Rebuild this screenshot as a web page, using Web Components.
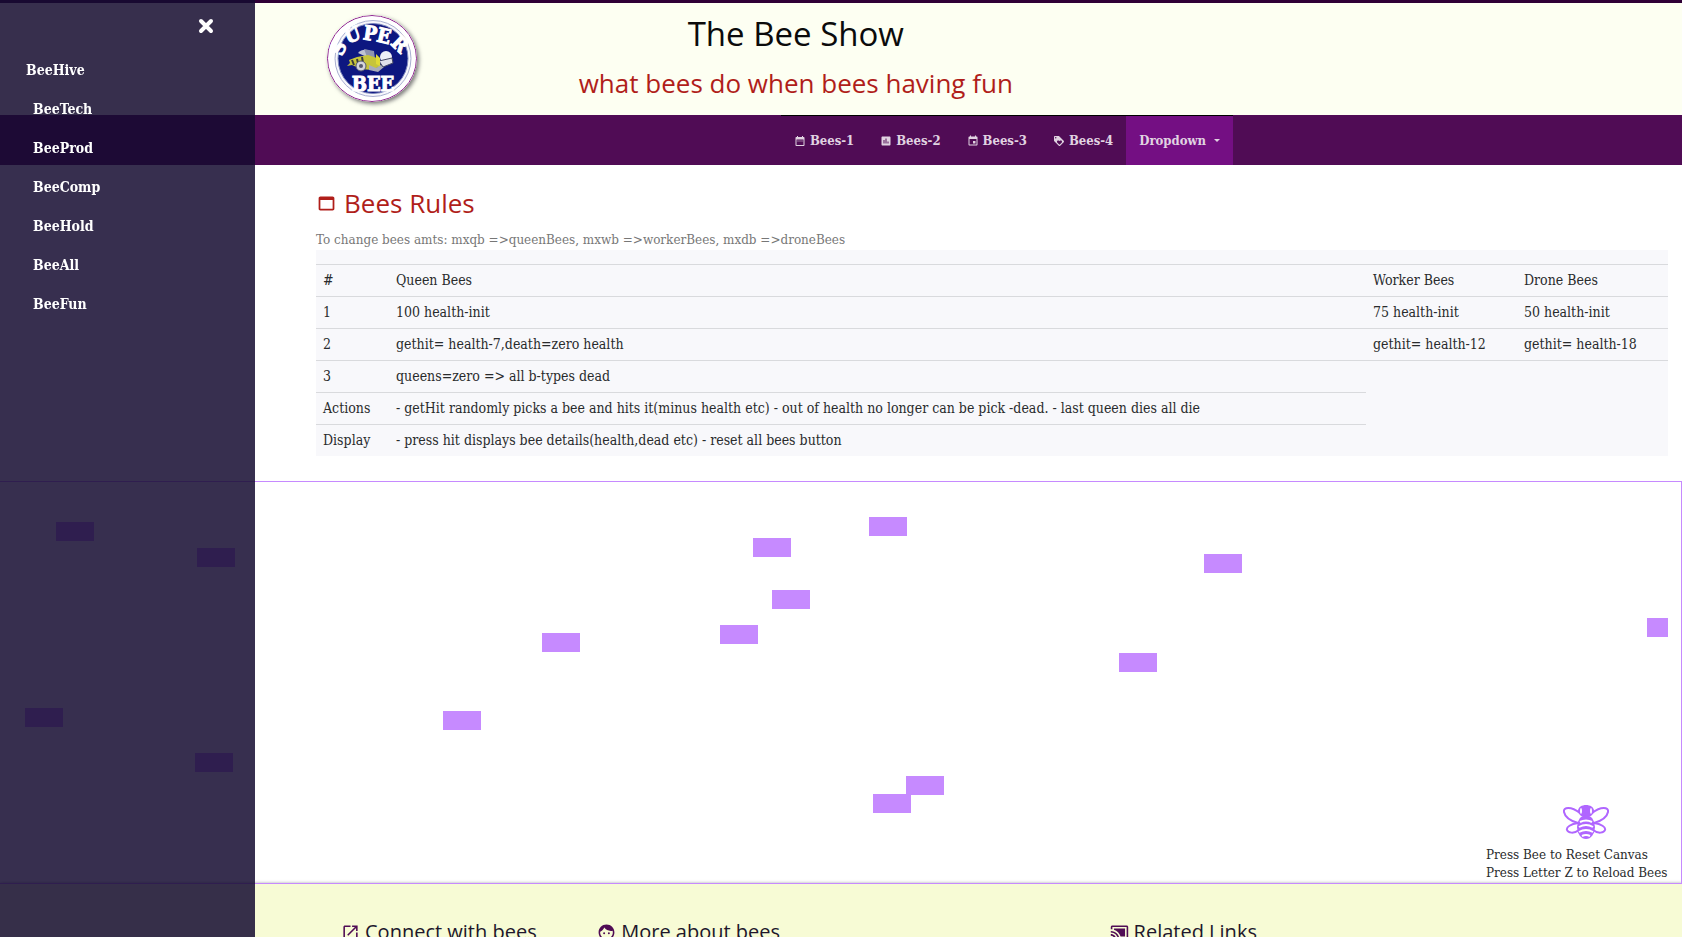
<!DOCTYPE html>
<html lang="en">
<head>
<meta charset="utf-8">
<title>The Bee Show</title>
<style>
  body {
    margin: 0;
    background: #fff;
    color: #292b2c;
    font: 14px/18px "DejaVu Serif Condensed", "DejaVu Serif", serif;
    --heading: "Open Sans", "Noto Sans", sans-serif;
    --plum: #500c55;
    --lilac: #c68aff;
    --crimson: #b01e1a;
  }
</style>
</head>
<body>
<bee-header></bee-header>
<bee-nav></bee-nav>
<main>
  <bee-rules></bee-rules>
  <bee-canvas></bee-canvas>
</main>
<bee-footer></bee-footer>
<bee-sidebar>
  <bee-side-link lead>BeeHive</bee-side-link>
  <bee-side-link>BeeTech</bee-side-link>
  <bee-side-link>BeeProd</bee-side-link>
  <bee-side-link>BeeComp</bee-side-link>
  <bee-side-link>BeeHold</bee-side-link>
  <bee-side-link>BeeAll</bee-side-link>
  <bee-side-link>BeeFun</bee-side-link>
</bee-sidebar>

<script>
const define = (name, html, setup) => customElements.define(name, class extends HTMLElement {
  constructor() {
    super();
    this.attachShadow({ mode: 'open' }).innerHTML = html;
  }
  connectedCallback() {
    if (setup) setup(this, this.shadowRoot);
  }
});

const ICONS = {
  range: 'M9 11H7v2h2v-2zm4 0h-2v2h2v-2zm4 0h-2v2h2v-2zm2-7h-1V2h-2v2H8V2H6v2H5c-1.1 0-2 .9-2 2v14c0 1.100.900 2 2 2h14c1.100 0 2-.9 2-2V6c0-1.100-.9-2-2-2zm0 16H5V9h14v11z',
  poll: 'M19 3H5c-1.100 0-2 .9-2 2v14c0 1.100.900 2 2 2h14c1.100 0 2-.9 2-2V5c0-1.100-.9-2-2-2zM9 17H7v-7h2v7zm4 0h-2V7h2v10zm4 0h-2v-4h2v4z',
  event: 'M17 12h-5v5h5v-5zM16 1v2H8V1H6v2H5c-1.100 0-2 .9-2 2v14c0 1.100.900 2 2 2h14c1.100 0 2-.9 2-2V5c0-1.100-.9-2-2-2h-1V1h-2zm3 18H5V8h14v11z',
  loyalty: 'M21.410 11.580l-9-9C12.050 2.220 11.550 2 11 2H4c-1.100 0-2 .9-2 2v7c0 .55.220 1.050.590 1.420l9 9c.36.360.860.580 1.410.580s1.050-.22 1.410-.59l7-7c.37-.36.590-.86.590-1.410s-.23-1.060-.59-1.420zM5.500 7C4.670 7 4 6.330 4 5.500S4.670 4 5.500 4 7 4.670 7 5.500 6.330 7 5.500 7zm11.770 8.270L13 19.540l-4.270-4.270C8.280 14.810 8 14.190 8 13.500c0-1.380 1.120-2.500 2.500-2.500.69 0 1.320.280 1.770.740l.73.720.73-.73c.45-.45 1.080-.73 1.770-.73 1.380 0 2.500 1.120 2.500 2.500 0 .69-.28 1.320-.73 1.770z',
  window: 'M19 4H5c-1.110 0-2 .9-2 2v12c0 1.100.890 2 2 2h14c1.100 0 2-.9 2-2V6c0-1.100-.9-2-2-2zm0 14H5V8h14v10z',
  open: 'M19 19H5V5h7V3H5c-1.110 0-2 .9-2 2v14c0 1.100.890 2 2 2h14c1.100 0 2-.9 2-2v-7h-2v7zM14 3v2h3.590l-9.830 9.830 1.410 1.410L19 6.410V10h2V3h-7z',
  face: 'M9 11.750a1.250 1.250 0 1 0 0 2.500 1.250 1.250 0 0 0 0-2.500zm6 0a1.250 1.250 0 1 0 0 2.500 1.250 1.250 0 0 0 0-2.500zM12 2C6.480 2 2 6.480 2 12s4.480 10 10 10 10-4.480 10-10S17.520 2 12 2zm0 18c-4.410 0-8-3.590-8-8 0-.29.020-.58.050-.86 2.360-1.050 4.230-2.980 5.210-5.370C11.070 8.330 14.050 10 17.420 10c.78 0 1.530-.09 2.250-.26.210.710.330 1.470.330 2.260 0 4.410-3.590 8-8 8z',
  cast: 'M1 18v3h3c0-1.660-1.340-3-3-3zm0-4v2c2.760 0 5 2.240 5 5h2c0-3.870-3.130-7-7-7zm18-7H5v1.630c3.960 1.280 7.090 4.410 8.370 8.370H19V7zM1 10v2c4.970 0 9 4.030 9 9h2c0-6.080-4.930-11-11-11zm20-7H3c-1.100 0-2 .9-2 2v3h2V5h18v14h-7v2h7c1.100 0 2-.9 2-2V5c0-1.100-.9-2-2-2z'
};

define('bee-icon', `
  <style>
    :host { display: inline-flex; flex: none; width: var(--size, 12px); height: var(--size, 12px); }
    svg { width: 100%; height: 100%; fill: currentColor; }
  </style>
  <svg viewBox="0 0 24 24" aria-hidden="true"><path/></svg>`,
  (host, root) => root.querySelector('path').setAttribute('d', ICONS[host.getAttribute('name')]));

define('bee-logo', `
  <style>
    :host { display: block; width: 90px; height: 87px; }
    svg { display: block; width: 100%; height: 100%; border-radius: 50%; box-shadow: 2px 2px 4px #777; }
    text { fill: #fff; stroke: #fff; font: 900 20px "DejaVu Serif Condensed", "DejaVu Serif", serif; }
  </style>
  <svg viewBox="0 0 90 87" role="img" aria-label="Super Bee">
    <defs>
      <path id="top" d="M17 57C10 20 38 24 46 26S72 26 78 54"/>
    </defs>
    <ellipse cx="45" cy="43.500" rx="44.500" ry="43" fill="#fff" stroke="#8e2290"/>
    <circle cx="46" cy="43.500" r="38" fill="#f7f7fb" stroke="#a9afd0"/>
    <circle cx="46" cy="43.500" r="35" fill="#0d1780" stroke="#7d86bd"/>
    <text><textPath href="#top" startOffset="50%" text-anchor="middle">SUPER</textPath></text>
    <text x="46" y="76" text-anchor="middle">BEE</text>
    <g>
      <path d="M31 38c4-5 12-4 15 1l-4 4z" fill="#bfc3d4"/>
      <path d="M37 34l10 2 1 8-8-2z" fill="#8f94b0"/>
      <path d="M22 45l8-3 11-2 9 3 4 8-9 4-11-1-9-4-5 1 3-3z" fill="#c6c43a"/>
      <path d="M30 44l2 8M35 42l1 6M25 45l2 5" stroke="#3a3b3a" stroke-width="2"/>
      <circle cx="34" cy="51" r="5" fill="#d5d6dd" stroke="#55586f"/>
      <circle cx="34" cy="51" r="2" fill="#55586f"/>
      <path d="M42 50l7 3 5-3 3 2-6 5-9-2z" fill="#a9adba"/>
      <circle cx="59" cy="42" r="6" fill="#eef0f7"/>
      <path d="M52 46l13-3 1 5-10 4z" fill="#dfe1ea" stroke="#454965"/>
      <path d="M49 39l4 4 0 8-4-2z" fill="#e0da35"/>
    </g>
  </svg>`);

define('bee-header', `
  <style>
    :host {
      display: grid; grid-template-columns: 106px 3fr 2fr; box-sizing: border-box;
      min-height: 115px; padding: 0 14px 0 316px;
      border-top: 3px solid #2f0036; background: #fdfff2;
    }
    bee-logo { margin: 12px 0 0 11px; }
    div { text-align: center; font-family: var(--heading); }
    h1, h2 { margin: 0; font-weight: 400; }
    h1 { padding-top: 8px; font-size: 33px; line-height: 46px; color: #0b0b0b; }
    h2 { font-size: 26px; line-height: 52px; color: var(--crimson); }
  </style>
  <bee-logo></bee-logo>
  <div><h1>The Bee Show</h1><h2>what bees do when bees having fun</h2></div>`);

define('bee-nav', `
  <style>
    :host { display: flex; justify-content: center; padding-left: 332px; background: var(--plum); }
    ul { display: flex; margin: 0; padding: 0; list-style: none; border-top: 1px solid #000; }
    a, button {
      display: flex; align-items: center; height: 49px; padding: 0 13px; gap: 4px;
      font: bold 13px/18px "DejaVu Serif Condensed", "DejaVu Serif", serif;
      color: #e0d3e1; text-decoration: none; border: 0;
    }
    li { flex: none; }
    button { gap: 8px; background: #740f83; cursor: pointer; }
    i { border: 3px solid transparent; border-top-color: currentColor; border-bottom: 0; }
  </style>
  <ul>
    <li><a href="#bees-1"><bee-icon name="range"></bee-icon>Bees-1</a></li>
    <li><a href="#bees-2"><bee-icon name="poll"></bee-icon>Bees-2</a></li>
    <li><a href="#bees-3"><bee-icon name="event"></bee-icon>Bees-3</a></li>
    <li><a href="#bees-4"><bee-icon name="loyalty"></bee-icon>Bees-4</a></li>
    <li><button type="button" aria-haspopup="true">Dropdown<i></i></button></li>
  </ul>`);

define('bee-rules', `
  <style>
    :host { display: block; padding: 19px 14px 25px 316px; }
    h2 {
      display: flex; align-items: center; gap: 7px; margin: 0;
      font: 26px/38px var(--heading); color: var(--crimson);
    }
    bee-icon { --size: 21px; }
    p { margin: 9px 0 0; font: 12px/19px "DejaVu Serif", serif; color: #777; }
    table { width: 100%; table-layout: fixed; border-collapse: separate; border-spacing: 0; background: #f8f8fb; }
    thead th { height: 14px; padding: 0; }
    .key { width: 73px; }
    .kind { width: 151px; }
    td { height: 29px; padding: 0 8px 2px 7px; border-top: 1px solid #d9dadd; line-height: 18px; white-space: nowrap; }
  </style>
  <h2><bee-icon name="window"></bee-icon>Bees Rules</h2>
  <p>To change bees amts: mxqb =&gt;queenBees, mxwb =&gt;workerBees, mxdb =&gt;droneBees</p>
  <table>
    <thead><tr><th class="key"></th><th></th><th class="kind"></th><th class="kind"></th></tr></thead>
    <tbody>
      <tr><td>#</td><td>Queen Bees</td><td>Worker Bees</td><td>Drone Bees</td></tr>
      <tr><td>1</td><td>100 health-init</td><td>75 health-init</td><td>50 health-init</td></tr>
      <tr><td>2</td><td>gethit= health-7,death=zero health</td><td>gethit= health-12</td><td>gethit= health-18</td></tr>
      <tr><td>3</td><td>queens=zero =&gt; all b-types dead</td><td colspan="2" rowspan="3"></td></tr>
      <tr><td>Actions</td><td>- getHit randomly picks a bee and hits it(minus health etc) - out of health no longer can be pick -dead. - last queen dies all die</td></tr>
      <tr><td>Display</td><td>- press hit displays bee details(health,dead etc) - reset all bees button</td></tr>
    </tbody>
  </table>`);

/* Top-left corners of the bees, measured inside the canvas border. */
const BEES = [
  [56, 40], [197, 66], [25, 226], [195, 271], [443, 229], [542, 151], [720, 143],
  [753, 56], [772, 108], [869, 35], [1204, 72], [1119, 171], [1647, 136], [906, 294], [873, 312]
];

define('bee-canvas', `
  <style>
    :host { display: block; position: relative; border: 1px solid var(--lilac); border-left: 0; }
    .field { display: block; width: calc(100% - 13px); height: 401px; }
    .field rect { fill: var(--lilac); }
    .help { position: absolute; right: 13px; bottom: 1px; width: 182px; font: 12px/18px "DejaVu Serif", serif; }
    p { margin: 0; white-space: nowrap; }
    button { display: block; margin: 0 0 6px 77px; padding: 0; border: 0; background: none; cursor: pointer; }
    button svg { display: block; width: 46px; height: 36px; }
  </style>
  <svg class="field" aria-hidden="true"></svg>
  <div class="help">
    <button type="button" aria-label="Reset canvas">
      <svg viewBox="0 0 46 36" fill="none" stroke="#b066ff">
        <path d="M17 9C8 2 0 3 1 8s7 9 14 11c-7 1-12 4-11 7s7 4 12 0M29 9c9-7 17-6 16-1s-7 9-14 11c7 1 12 4 11 7s-7 4-12 0" stroke-width="2"/>
        <path d="M15 7c0-4 4-6 8-6s8 2 8 6c0 2-2 4-3 5H18c-1-1-3-3-3-5z" fill="#b066ff" stroke="none"/>
        <ellipse cx="18" cy="7" rx="1" ry="3" fill="#fff" stroke="none"/>
        <ellipse cx="28" cy="7" rx="1" ry="3" fill="#fff" stroke="none"/>
        <ellipse cx="23" cy="23" rx="9" ry="12" fill="#b066ff" stroke="none"/>
        <path d="M17 18q6-3 12 0M16 23q7-4 14 0M16 28q7-4 14 0M19 32q4-2 8 0" stroke="#fff" stroke-width="2"/>
      </svg>
    </button>
    <p>Press Bee to Reset Canvas</p>
    <p>Press Letter Z to Reload Bees</p>
  </div>`,
  (host, root) => {
    root.querySelector('.field').innerHTML =
      BEES.map(([x, y]) => `<rect x="${x}" y="${y}" width="38" height="19"/>`).join('');
  });

define('bee-footer', `
  <style>
    :host {
      display: grid; grid-template-columns: 1fr 2fr 2fr; padding: 32px 60px 32px 341px;
      background: #f7fbd5; box-shadow: 0 -1px 3px #aaa;
    }
    h3 { display: flex; align-items: center; gap: 5px; margin: 0; font: 20px/32px var(--heading); color: #20162c; }
    bee-icon { --size: 19px; color: var(--plum); }
  </style>
  <h3><bee-icon name="open"></bee-icon>Connect with bees</h3>
  <h3><bee-icon name="face"></bee-icon>More about bees</h3>
  <h3><bee-icon name="cast"></bee-icon>Related Links</h3>`);

define('bee-side-link', `
  <style>
    :host { display: block; padding-left: 33px; }
    :host([lead]) { padding-left: 26px; }
    a { display: block; font-weight: bold; line-height: 39px; color: #fff; text-decoration: none; }
  </style>
  <a href="#"><slot></slot></a>`);

define('bee-sidebar', `
  <style>
    :host { display: block; position: fixed; top: 0; bottom: 0; left: 0; width: 255px; z-index: 2; background: rgba(20, 10, 48, .85); }
    button { display: block; margin: 16px 39px 15px auto; padding: 2px; border: 0; background: none; cursor: pointer; }
    svg { display: block; width: 16px; height: 16px; }
  </style>
  <button type="button" aria-label="Close menu">
    <svg viewBox="0 0 16 16"><path d="M3 3l10 10M13 3L3 13" stroke="#fff" stroke-width="4" stroke-linecap="round"/></svg>
  </button>
  <nav><slot></slot></nav>`);
</script>
</body>
</html>
